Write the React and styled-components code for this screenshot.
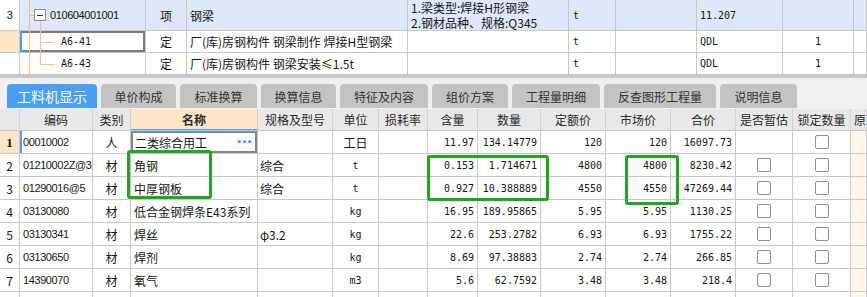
import React from 'react'
import styled, { createGlobalStyle, css } from 'styled-components'

const LINE = '#c8c8c8'
const PEACH = '#fde5c6'
const BLUE = '#4a9ff5'
const ROWBLUE = '#dde8fa'

const GlobalStyle = createGlobalStyle`
  html, body { margin: 0; padding: 0; background: #fff; }
  body {
    font-family: "Noto Sans CJK SC", "Noto Sans", sans-serif;
    font-size: 12px;
    color: #161616;
    overflow: hidden;
  }
`

const Page = styled.div`
  position: relative;
  width: 867px;
  height: 297px;
  overflow: hidden;
  background: #fff;
`

// upper grid: 清单 / 定额 rows
const TopGrid = styled.div`
  position: relative;
  display: grid;
  grid-template-columns: 20px 126px 41px 221px 161px 47px 81px 86px 71px 1fr;
  grid-template-rows: 31px 22px 22px;
`

const Cell = styled.div`
  display: flex;
  align-items: center;
  justify-content: ${p => p.$align === 'center' ? 'center' : p.$align === 'right' ? 'flex-end' : 'flex-start'};
  box-sizing: border-box;
  padding-left: ${p => p.$pl ?? 0}px;
  padding-right: ${p => p.$pr ?? 0}px;
  border-right: 1px solid ${LINE};
  border-bottom: 1px solid ${LINE};
  background: ${p => p.$bg || '#fff'};
  white-space: nowrap;
  overflow: hidden;
  line-height: 15px;
  ${p => p.$mono && css`
    font-family: "DejaVu Sans Mono", "Liberation Mono", monospace;
    font-size: 10px;
  `}
  ${p => p.$code && css`
    font-family: "Liberation Sans", Arial, sans-serif;
    font-size: 11px;
    letter-spacing: -0.4px;
  `}
  ${p => p.$bold && css`
    font-family: "Liberation Serif", serif;
    font-weight: bold;
    font-size: 13px;
  `}
  ${p => p.$focus && css`
    box-shadow: inset 2px 0 0 ${BLUE}, inset 0 0 0 2px #7c7c7c;
  `}
  ${p => p.$current && css`
    box-shadow: inset 2px 0 0 ${BLUE};
  `}
  ${p => p.$editing && css`
    box-shadow: inset 0 1px 0 ${BLUE}, inset 0 0 0 2px #858585;
  `}
`

const Lines = styled.div`
  display: flex;
  flex-direction: column;
  line-height: 15px;
`

const TreeLines = styled.svg`
  position: absolute;
  left: 20px;
  top: 0;
  pointer-events: none;
`

const TabStrip = styled.div`
  display: flex;
  gap: 4px;
  height: 34px;
  box-sizing: border-box;
  padding: 6px 0 1px 7px;
  background: #f0f0f0;
  border-top: 3px solid #c9c9c9;
`

const Tab = styled.div`
  width: ${p => p.$w}px;
  height: 24px;
  border-radius: 4px 4px 0 0;
  display: flex;
  align-items: center;
  justify-content: center;
  background: ${p => p.$active ? BLUE : '#c3c3c3'};
  color: ${p => p.$active ? '#fff' : '#333'};
  font-size: ${p => p.$active ? 14 : 12}px;
`

const COLS = '20px 73px 38px 127px 75px 46px 49px 50px 63px 65px 65px 65px 57px 58px 1fr'

const Row = styled.div`
  display: grid;
  grid-template-columns: ${COLS};
  height: ${p => p.$h || 23}px;
`

const HCell = styled.div`
  display: flex;
  align-items: center;
  justify-content: ${p => p.$left ? 'flex-start' : 'center'};
  padding-left: ${p => p.$left ? 3 : 0}px;
  box-sizing: border-box;
  background: ${p => p.$active ? PEACH : '#e8e8e8'};
  border-right: 1px solid #d2d2d2;
  border-bottom: 1px solid ${LINE};
  color: #2a2a2a;
  font-weight: ${p => p.$active ? 'bold' : 'normal'};
  white-space: nowrap;
  overflow: hidden;
  ${p => p.$active && css`box-shadow: inset 0 -1px 0 ${BLUE};`}
`

const Check = styled.span`
  width: 12px;
  height: 12px;
  border: 1px solid #8e8e8e;
  border-radius: 2px;
  background: #fff;
`

const Dots = styled.span`
  margin-left: auto;
  margin-right: 5px;
  color: ${BLUE};
  font-family: "DejaVu Sans", sans-serif;
  font-weight: bold;
  font-size: 9px;
  letter-spacing: -0.5px;
`

const Highlight = styled.div`
  position: absolute;
  left: ${p => p.$x}px;
  top: ${p => p.$y}px;
  width: ${p => p.$w}px;
  height: ${p => p.$h}px;
  box-sizing: border-box;
  border: 3px solid #21a621;
  border-radius: 3px;
  pointer-events: none;
`

const tabs = [
  ['工料机显示', 90, true],
  ['单价构成', 75],
  ['标准换算', 77],
  ['换算信息', 75],
  ['特征及内容', 88],
  ['组价方案', 76],
  ['工程量明细', 88],
  ['反查图形工程量', 112],
  ['说明信息', 77],
]

const headers = ['', '编码', '类别', '名称', '规格及型号', '单位', '损耗率', '含量', '数量', '定额价', '市场价', '合价', '是否暂估', '锁定数量', '原']

const rows = [
  { n: 1, code: '00010002', type: '人', name: '二类综合用工', spec: '', unit: '工日', qty: '11.97', amt: '134.14779', dp: '120', mp: '120', total: '16097.73', est: false, current: true },
  { n: 2, code: '01210002Z@3', type: '材', name: '角钢', spec: '综合', unit: 't', qty: '0.153', amt: '1.714671', dp: '4800', mp: '4800', total: '8230.42', est: true },
  { n: 3, code: '01290016@5', type: '材', name: '中厚钢板', spec: '综合', unit: 't', qty: '0.927', amt: '10.388889', dp: '4550', mp: '4550', total: '47269.44', est: true },
  { n: 4, code: '03130080', type: '材', name: '低合金钢焊条E43系列', spec: '', unit: 'kg', qty: '16.95', amt: '189.95865', dp: '5.95', mp: '5.95', total: '1130.25', est: true },
  { n: 5, code: '03130341', type: '材', name: '焊丝', spec: 'φ3.2', unit: 'kg', qty: '22.6', amt: '253.2782', dp: '6.93', mp: '6.93', total: '1755.22', est: true },
  { n: 6, code: '03130650', type: '材', name: '焊剂', spec: '', unit: 'kg', qty: '8.69', amt: '97.38883', dp: '2.74', mp: '2.74', total: '266.85', est: true },
  { n: 7, code: '14390070', type: '材', name: '氧气', spec: '', unit: 'm3', qty: '5.6', amt: '62.7592', dp: '3.48', mp: '3.48', total: '218.4', est: true },
]

function MaterialRow({ r }) {
  return (
    <Row>
      <Cell $align="center" $bg={r.current ? PEACH : '#fff'} $bold={r.current}>{r.n}</Cell>
      <Cell $code $pl={3} $current={r.current}>{r.code}</Cell>
      <Cell $align="center">{r.type}</Cell>
      {r.current
        ? <Cell $pl={4} $editing>{r.name}<Dots>•••</Dots></Cell>
        : <Cell $pl={3}>{r.name}</Cell>}
      <Cell $pl={2}>{r.spec}</Cell>
      <Cell $align="center" $mono={r.unit !== '工日'}>{r.unit}</Cell>
      <Cell />
      <Cell $mono $align="right" $pr={3}>{r.qty}</Cell>
      <Cell $mono $align="right" $pr={3}>{r.amt}</Cell>
      <Cell $mono $align="right" $pr={3}>{r.dp}</Cell>
      <Cell $mono $align="right" $pr={3}>{r.mp}</Cell>
      <Cell $mono $align="right" $pr={3}>{r.total}</Cell>
      <Cell $align="center">{r.est && <Check />}</Cell>
      <Cell $align="center"><Check /></Cell>
      <Cell $bg="#fff7ee" />
    </Row>
  )
}

export default function App() {
  return (
    <Page>
      <GlobalStyle />
      <TopGrid>
        <Cell $align="center" $code>3</Cell>
        <Cell $code $pl={30} $bg={ROWBLUE}>010604001001</Cell>
        <Cell $align="center" $bg={ROWBLUE}>项</Cell>
        <Cell $pl={3} $bg={ROWBLUE}>钢梁</Cell>
        <Cell $pl={3} $bg={ROWBLUE}>
          <Lines>
            <span>1.梁类型:焊接H形钢梁</span>
            <span>2.钢材品种、规格:Q345</span>
          </Lines>
        </Cell>
        <Cell $mono $pl={4} $bg={ROWBLUE}>t</Cell>
        <Cell $bg={ROWBLUE} />
        <Cell $mono $pl={3} $bg={ROWBLUE}>11.207</Cell>
        <Cell $bg={ROWBLUE} />
        <Cell $bg={ROWBLUE} />

        <Cell $bg={PEACH} />
        <Cell $mono $pl={41} $focus>A6-41</Cell>
        <Cell $align="center">定</Cell>
        <Cell $pl={3}>厂(库)房钢构件 钢梁制作 焊接H型钢梁</Cell>
        <Cell />
        <Cell $mono $pl={4}>t</Cell>
        <Cell />
        <Cell $mono $pl={3}>QDL</Cell>
        <Cell $mono $align="center">1</Cell>
        <Cell />

        <Cell />
        <Cell $mono $pl={41}>A6-43</Cell>
        <Cell $align="center">定</Cell>
        <Cell $pl={3}>厂(库)房钢构件 钢梁安装≤1.5t</Cell>
        <Cell />
        <Cell $mono $pl={4}>t</Cell>
        <Cell />
        <Cell $mono $pl={3}>QDL</Cell>
        <Cell $mono $align="center">1</Cell>
        <Cell />

        <TreeLines width="126" height="75" viewBox="0 0 126 75">
          <g stroke="#f5c27a" strokeWidth="1" fill="none">
            <line x1="9.5" y1="0" x2="9.5" y2="75" />
            <line x1="9.5" y1="15.5" x2="14" y2="15.5" />
            <line x1="20.5" y1="21" x2="20.5" y2="64.5" />
            <line x1="20.5" y1="42.5" x2="35" y2="42.5" />
            <line x1="20.5" y1="64.5" x2="35" y2="64.5" />
          </g>
          <rect x="14.5" y="9.5" width="11" height="11" fill="#fff" stroke="#8c8c8c" />
          <line x1="17" y1="15.5" x2="23" y2="15.5" stroke="#333" />
        </TreeLines>
      </TopGrid>

      <TabStrip>
        {tabs.map(([label, w, active]) => (
          <Tab key={label} $w={w} $active={active}>{label}</Tab>
        ))}
      </TabStrip>

      <Row $h={22}>
        {headers.map((h, i) => (
          <HCell key={i} $active={h === '名称'} $left={h === '原'}>{h}</HCell>
        ))}
      </Row>

      {rows.map(r => <MaterialRow key={r.n} r={r} />)}
      <Row>
        {headers.map((h, i) => <Cell key={i} $bg={i === 14 ? '#fff7ee' : '#fff'} />)}
      </Row>

      <Highlight $x={127} $y={150} $w={85} $h={49} />
      <Highlight $x={427} $y={155} $w={122} $h={46} />
      <Highlight $x={625} $y={155} $w={54} $h={50} />
    </Page>
  )
}
